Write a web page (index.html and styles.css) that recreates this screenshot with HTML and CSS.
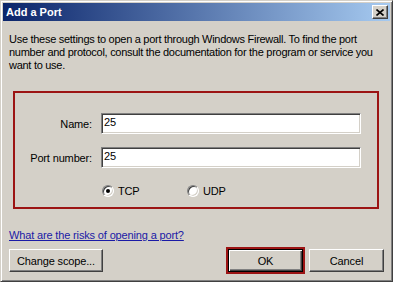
FILE: index.html
```html
<!DOCTYPE html>
<html lang="en">
<head>
    <meta charset="UTF-8">
    <title>Add a Port</title>
    <link rel="stylesheet" href="styles.css">
</head>
<body>
    <div class="window">
        <div class="titlebar">
            <span class="title">Add a Port</span>
            <span class="close">
                <svg width="8" height="7" viewBox="0 0 8 7">
                    <path d="M0.5 0.5 L7.5 6.5 M7.5 0.5 L0.5 6.5" stroke="#000" stroke-width="1.6" fill="none"/>
                </svg>
            </span>
        </div>

        <div class="content">
            <p class="intro">Use these settings to open a port through Windows Firewall. To find the port number and protocol, consult the documentation for the program or service you want to use.</p>

            <div class="port-box">
                <div class="field">
                    <span class="field-label">Name:</span>
                    <div class="textbox">25</div>
                </div>
                <div class="field">
                    <span class="field-label">Port number:</span>
                    <div class="textbox">25</div>
                </div>
                <div class="protocols">
                    <span class="option"><span class="radio checked"></span>TCP</span>
                    <span class="option"><span class="radio"></span>UDP</span>
                </div>
            </div>

            <a class="risk-link" href="#">What are the risks of opening a port?</a>

            <div class="actions">
                <span class="btn scope">Change scope...</span>
                <span class="spacer"></span>
                <span class="btn default">OK</span>
                <span class="btn">Cancel</span>
            </div>
        </div>
    </div>
</body>
</html>
```

FILE: styles.css
```css
* {
    margin: 0;
    padding: 0;
    box-sizing: border-box;
}

body {
    background-color: #d4d0c8;
    font-family: 'Liberation Sans', Arial, sans-serif;
    font-size: 11px;
    letter-spacing: -0.15px;
    color: #000;
}

.window {
    width: 393px;
    height: 282px;
    padding: 2px;
    background-color: #d4d0c8;
    border: 1px solid;
    border-color: #d4d0c8 #404040 #404040 #d4d0c8;
    box-shadow: inset 1px 1px 0 #fff, inset -1px -1px 0 #808080;
}

.titlebar {
    height: 18px;
    display: flex;
    align-items: center;
    justify-content: space-between;
    padding: 0 2px 0 3px;
    background: linear-gradient(to right, #0a246a, #a6caf0);
}

.title {
    color: #fff;
    font-weight: 700;
    font-size: 11px;
    letter-spacing: 0;
}

.close {
    width: 16px;
    height: 14px;
    display: flex;
    align-items: center;
    justify-content: center;
    background-color: #d4d0c8;
    border: 1px solid;
    border-color: #fff #404040 #404040 #fff;
    box-shadow: inset -1px -1px 0 #808080;
}

.content {
    padding: 12px 6px 0 6px;
}

.intro {
    line-height: 13px;
    height: 39px;
    letter-spacing: -0.28px;
}

/* red highlight around the port fields */
.port-box {
    margin: 19px 0 0 4px;
    width: 366px;
    border: 2px solid #9c1414;
    padding: 20px 16px 10px 0;
}

.field {
    display: flex;
    align-items: center;
    gap: 9px;
    margin-bottom: 13px;
}

.field-label {
    width: 77px;
    text-align: right;
}

.textbox {
    width: 260px;
    height: 21px;
    padding: 2px 2px;
    line-height: 13px;
    background-color: #fff;
    border: 1px solid;
    border-color: #808080 #fff #fff #808080;
    box-shadow: inset 1px 1px 0 #404040, inset -1px -1px 0 #d4d0c8;
}

.protocols {
    display: flex;
    align-items: center;
    padding-left: 87px;
    margin-top: 16px;
    height: 13px;
}

.option {
    display: flex;
    align-items: center;
    gap: 4px;
    width: 85px;
}

.radio {
    position: relative;
    width: 12px;
    height: 12px;
    border-radius: 50%;
    background-color: #fff;
    border: 1px solid;
    border-color: #808080 #fff #fff #808080;
    box-shadow: inset 1px 1px 0 #404040, inset -1px -1px 0 #d4d0c8;
}

.radio.checked::after {
    content: '';
    position: absolute;
    left: 3px;
    top: 3px;
    width: 4px;
    height: 4px;
    border-radius: 50%;
    background-color: #000;
}

.risk-link {
    display: block;
    margin-top: 20px;
    line-height: 13px;
    color: #1a1aa6;
    text-decoration: underline;
}

.actions {
    display: flex;
    gap: 6px;
    margin-top: 7px;
}

.spacer {
    flex: 1;
}

.btn {
    width: 75px;
    height: 23px;
    display: flex;
    align-items: center;
    justify-content: center;
    background-color: #d4d0c8;
    border: 1px solid;
    border-color: #fff #404040 #404040 #fff;
    box-shadow: inset -1px -1px 0 #808080, inset 1px 1px 0 #d4d0c8;
}

.btn.scope {
    width: 94px;
}

.btn.default {
    border-color: #000;
    box-shadow: inset 1px 1px 0 #fff, inset -1px -1px 0 #404040, inset -2px -2px 0 #808080;
    outline: 2px solid #9c1414;
    outline-offset: 0;
}
```
